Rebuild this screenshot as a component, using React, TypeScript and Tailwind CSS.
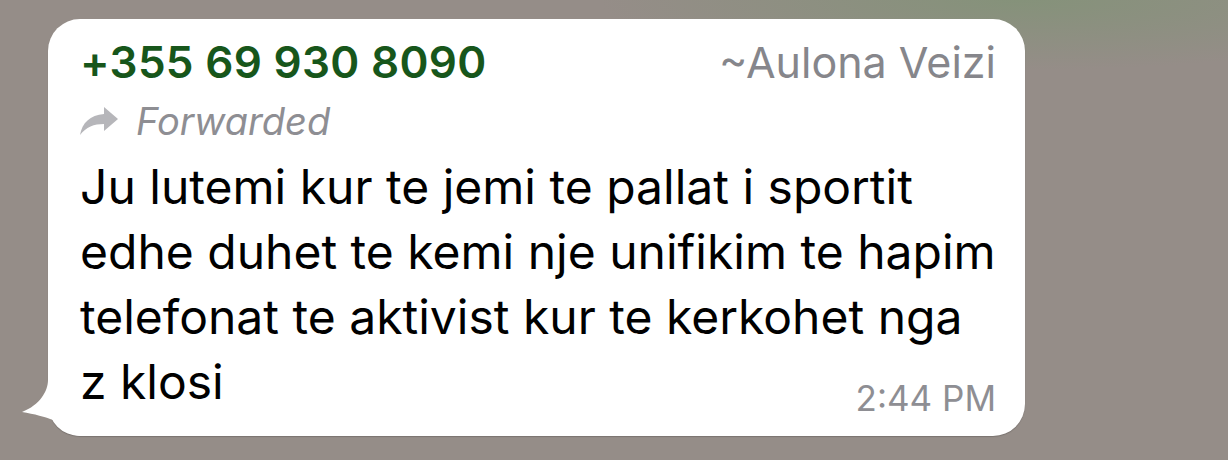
export default function App() {
  const lines = [
    "Ju lutemi kur te jemi te pallat i sportit",
    "edhe duhet te kemi nje unifikim te hapim",
    "telefonat te aktivist kur te kerkohet nga",
  ];

  return (
    <div
      className="w-[1228px] h-[460px] overflow-hidden bg-[#958d88] bg-[radial-gradient(ellipse_420px_70px_at_1020px_0px,#85927a_0%,#958d88_100%)] pt-[19px] pl-[48px]"
      style={{ fontFamily: "Inter, 'Liberation Sans', sans-serif" }}
    >
      <div className="relative w-[977px] h-[417px] rounded-[32px] bg-white shadow-[0_1px_1px_rgba(0,0,0,0.18)] pl-[32px] pr-[29px] pt-[15px]">
        {/* tail */}
        <svg
          className="absolute left-[-26px] bottom-0"
          width="60"
          height="65"
          viewBox="0 0 60 65"
        >
          <path
            d="M26 0 L26 9 C26 20 18 34 0 41 C12 43 24 46 31 49 C38 56 46 65 60 65 L60 0 Z"
            fill="#ffffff"
          />
        </svg>

        {/* header */}
        <div className="flex items-center justify-between h-[56px]">
          <span className="text-[#17561b] font-semibold text-[44px] leading-none tracking-[0.3px]">
            +355 69 930 8090
          </span>
          <span className="text-[#86868b] text-[43px] leading-none">~Aulona Veizi</span>
        </div>

        {/* forwarded */}
        <div className="flex items-center gap-[18px] h-[50px] mt-[6px]">
          <svg width="38" height="28" viewBox="0 0 38 28">
            <path
              d="M24 0 L38 12 L24 24 L24 17 C14 17 6 20 0 28 C2 16 10 8 24 7 Z"
              fill="#b6b6ba"
            />
          </svg>
          <span className="text-[#8e8e93] italic text-[38px] leading-none">Forwarded</span>
        </div>

        {/* body */}
        <div className="mt-[8px] text-black text-[48px] leading-[65px]">
          {lines.map((l) => (
            <div key={l} className="whitespace-nowrap">
              {l}
            </div>
          ))}
          <div className="flex items-end justify-between">
            <span>z klosi</span>
            <span className="text-[#8e8e93] text-[35px] leading-[34px] mb-[-1px]">2:44 PM</span>
          </div>
        </div>
      </div>
    </div>
  );
}
